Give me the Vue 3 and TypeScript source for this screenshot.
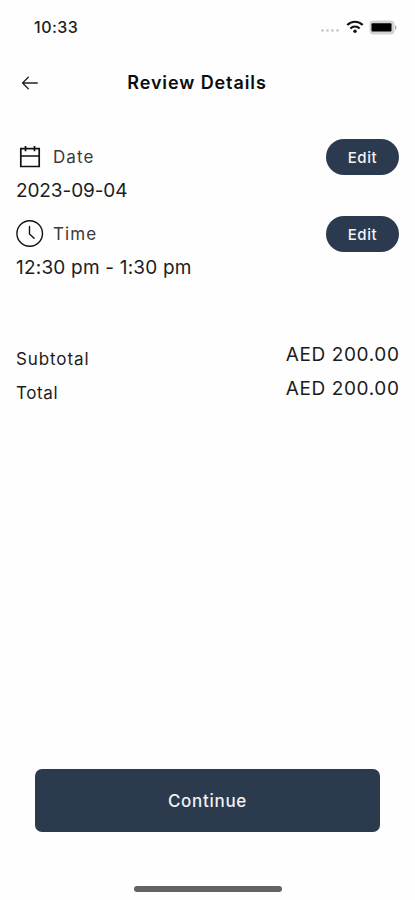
<script setup lang="ts">
interface Booking {
  kind: 'date' | 'time'
  label: string
  value: string
}

interface Charge {
  label: string
  amount: string
}

const bookings: Booking[] = [
  { kind: 'date', label: 'Date', value: '2023-09-04' },
  { kind: 'time', label: 'Time', value: '12:30 pm - 1:30 pm' },
]

const charges: Charge[] = [
  { label: 'Subtotal', amount: 'AED 200.00' },
  { label: 'Total', amount: 'AED 200.00' },
]
</script>

<template>
  <div class="screen">
    <div class="status">
      <span class="clock">10:33</span>
      <div class="indicators">
        <svg class="dots" width="20" height="14" viewBox="0 0 20 14" fill="#c4c4c4">
          <circle cx="2.5" cy="10.5" r="1.3" />
          <circle cx="7.5" cy="10.5" r="1.3" />
          <circle cx="12.5" cy="10.5" r="1.3" />
          <circle cx="17.5" cy="10.5" r="1.3" />
        </svg>
        <svg class="wifi" width="18" height="14" viewBox="0 0 18 14" fill="none" stroke="#111" stroke-width="2.2">
          <path d="M1.3 5.1C5.6.6 12.4.6 16.7 5.1" />
          <path d="M4.4 8.5c2.6-2.7 6.6-2.7 9.2 0" />
          <circle cx="9" cy="11.3" r="1.7" fill="#111" stroke="none" />
        </svg>
        <svg class="battery" width="28" height="15" viewBox="0 0 28 15">
          <rect x="0.5" y="0.5" width="25" height="14" rx="4" fill="#d2d2d2" />
          <rect x="2.5" y="3.2" width="20" height="8.4" rx="1" fill="#000" />
          <path d="M26 5.2c2 .6 2 4 0 4.6z" fill="#aaa" />
        </svg>
      </div>
    </div>

    <header class="header">
      <svg class="back" width="18" height="14" viewBox="0 0 18 14" fill="none" stroke="#222" stroke-width="1.3" stroke-linecap="round" stroke-linejoin="round">
        <path d="M16.3 7H1.5M7.3 1.2L1.500 7l5.800 5.800" />
      </svg>
      <h1 class="title">Review Details</h1>
    </header>

    <section class="bookings">
      <div v-for="item in bookings" :key="item.kind" class="booking">
        <div class="booking-head">
          <svg v-if="item.kind === 'date'" class="icon" width="28" height="28" viewBox="0 0 28 28" fill="none" stroke="#111" stroke-width="1.7">
            <path d="M4.800 5.700h18.400v17.800H4.800zM4.800 13h18.400M9.500 3v5.200M18.500 3v5.200" />
          </svg>
          <svg v-else class="icon" width="28" height="28" viewBox="0 0 28 28" fill="none" stroke="#111" stroke-width="1.4" stroke-linecap="round">
            <circle cx="13.700" cy="13.500" r="12.800" />
            <path d="M13.500 6.500V14l4.600 4.300" />
          </svg>
          <span class="booking-label">{{ item.label }}</span>
          <button class="edit" type="button">Edit</button>
        </div>
        <div class="value" :class="item.kind">{{ item.value }}</div>
      </div>
    </section>

    <section class="charges">
      <div v-for="charge in charges" :key="charge.label" class="charge">
        <span class="charge-label">{{ charge.label }}</span>
        <span class="amount">{{ charge.amount }}</span>
      </div>
    </section>

    <footer class="footer">
      <button class="continue" type="button">Continue</button>
      <div class="home-bar"></div>
    </footer>
  </div>
</template>

<style>
body {
  background: #fefefe;
}
</style>

<style scoped>
.screen {
  box-sizing: border-box;
  width: 415px;
  height: 900px;
  display: flex;
  flex-direction: column;
  background: #fefefe;
  color: #1c1c1c;
  font-family: Inter, "Liberation Sans", sans-serif;
  white-space: nowrap;
  overflow: hidden;
}

.status {
  height: 54px;
  box-sizing: border-box;
  padding: 0 18px 0 34px;
  display: flex;
  align-items: center;
  justify-content: space-between;
}

.clock {
  font-size: 16px;
  font-weight: 500;
  letter-spacing: 0.5px;
}

.indicators {
  display: flex;
  align-items: center;
}

.wifi {
  margin-left: 6px;
}

.battery {
  margin-left: 5px;
}

.header {
  height: 57px;
  box-sizing: border-box;
  padding: 0 21px;
  display: grid;
  grid-template-columns: 18px 1fr 39px;
  align-items: center;
}

.title {
  margin: 0;
  text-align: center;
  font-size: 18px;
  font-weight: 600;
  letter-spacing: 0.9px;
  color: #0c0c0c;
}

.bookings {
  padding: 28px 16px 0;
}

.booking {
  height: 77px;
}

.booking-head {
  height: 36px;
  display: flex;
  align-items: center;
}

.icon {
  flex: none;
}

.booking-label {
  margin-left: 9px;
  font-size: 17px;
  letter-spacing: 1.1px;
  color: #3a3a3a;
}

.edit {
  margin-left: auto;
  width: 73px;
  height: 36px;
  padding: 0;
  border: 0;
  border-radius: 18px;
  background: #2b3a4e;
  color: #f2f4f6;
  font: 500 15px Inter, "Liberation Sans", sans-serif;
  letter-spacing: 0.6px;
}

.value {
  padding-top: 1px;
  line-height: 30px;
  font-size: 19px;
}

.value.date {
  letter-spacing: -0.1px;
}

.value.time {
  letter-spacing: 0.2px;
}

.charges {
  padding: 47px 16px 0;
}

.charge {
  height: 34px;
  display: flex;
  justify-content: space-between;
  align-items: flex-start;
}

.charge-label {
  padding-top: 4px;
  line-height: 30px;
  font-size: 17px;
  letter-spacing: 0.9px;
}

.charge:last-child .charge-label {
  letter-spacing: 0.6px;
}

.amount {
  margin-right: -0.5px;
  line-height: 30px;
  font-size: 19px;
  letter-spacing: 0.6px;
}

.footer {
  margin-top: auto;
  display: flex;
  flex-direction: column;
  align-items: center;
}

.continue {
  width: 345px;
  height: 63px;
  padding: 0;
  border: 0;
  border-radius: 7px;
  background: #2b3a4c;
  color: #eef1f5;
  font: 500 17px Inter, "Liberation Sans", sans-serif;
  letter-spacing: 0.7px;
}

.home-bar {
  width: 148px;
  height: 6px;
  margin: 54px 0 8px;
  border-radius: 3px;
  background: #636363;
}
</style>
